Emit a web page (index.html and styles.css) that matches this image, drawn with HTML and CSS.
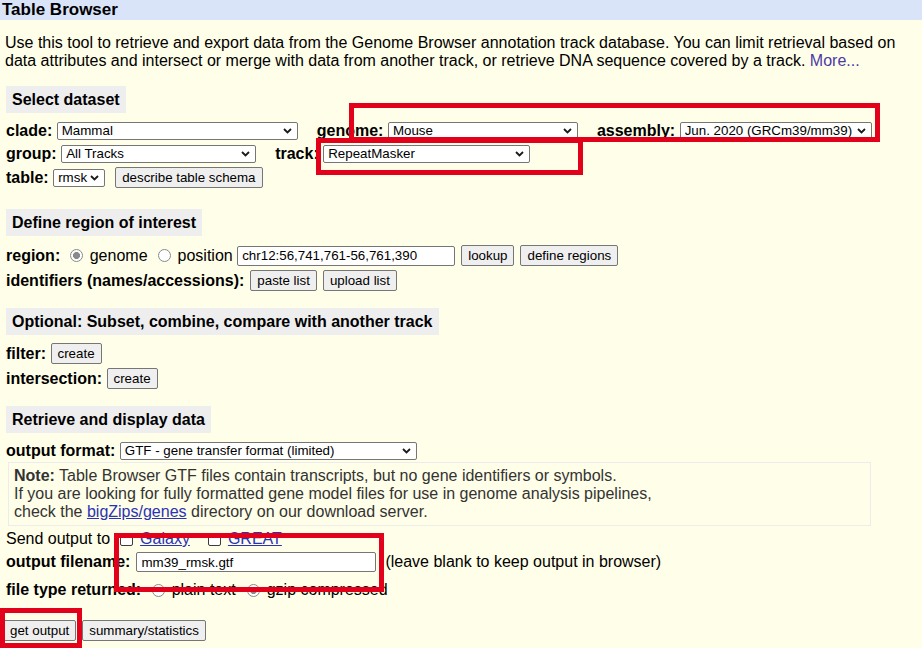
FILE: index.html
```html
<!DOCTYPE html>
<html>
<head>
<meta charset="utf-8">
<title>Table Browser</title>
<link rel="stylesheet" href="styles.css">
</head>
<body>
<div class="titlebar">Table Browser</div>
<main class="page">
  <p class="intro">Use this tool to retrieve and export data from the Genome Browser annotation track database. You can limit retrieval based on data attributes and intersect or merge with data from another track, or retrieve DNA sequence covered by a track. <a class="more" href="#">More...</a></p>

  <div class="banner b1">Select dataset</div>
  <div class="row h23 mt6">
    <span class="lbl">clade:</span>
    <span class="sel w-clade"><select><option>Mammal</option></select><svg viewBox="0 0 9 6"><polyline points="1,1 4.5,4.5 8,1"/></svg></span>
    <span class="lbl ml19">genome:</span>
    <span class="sel w-genome"><select><option>Mouse</option></select><svg viewBox="0 0 9 6"><polyline points="1,1 4.5,4.5 8,1"/></svg></span>
    <span class="lbl ml19">assembly:</span>
    <span class="sel w-assembly"><select><option>Jun. 2020 (GRCm39/mm39)</option></select><svg viewBox="0 0 9 6"><polyline points="1,1 4.5,4.5 8,1"/></svg></span>
  </div>
  <div class="row h23">
    <span class="lbl">group:</span>
    <span class="sel w-group"><select><option>All Tracks</option></select><svg viewBox="0 0 9 6"><polyline points="1,1 4.5,4.5 8,1"/></svg></span>
    <span class="lbl ml19">track:</span>
    <span class="sel w-track"><select><option>RepeatMasker</option></select><svg viewBox="0 0 9 6"><polyline points="1,1 4.5,4.5 8,1"/></svg></span>
  </div>
  <div class="row h25">
    <span class="lbl">table:</span>
    <span class="sel w-table"><select><option>rmsk</option></select><svg viewBox="0 0 9 6"><polyline points="1,1 4.5,4.5 8,1"/></svg></span>
    <button class="btn ml10">describe table schema</button>
  </div>

  <div class="banner b2">Define region of interest</div>
  <div class="row h23 mt8">
    <span class="lbl">region:</span>
    <input class="radio ml5" type="radio" name="region" checked>
    <span class="ml7">genome</span>
    <input class="radio ml10" type="radio" name="region">
    <span class="ml7">position</span>
    <input class="txt w-pos" type="text" value="chr12:56,741,761-56,761,390">
    <button class="btn ml6">lookup</button>
    <button class="btn ml6">define regions</button>
  </div>
  <div class="row h27">
    <span class="lbl">identifiers (names/accessions):</span>
    <button class="btn ml1">paste list</button>
    <button class="btn ml6">upload list</button>
  </div>

  <div class="banner b3">Optional: Subset, combine, compare with another track</div>
  <div class="row h25 mt6">
    <span class="lbl">filter:</span>
    <button class="btn">create</button>
  </div>
  <div class="row h25">
    <span class="lbl">intersection:</span>
    <button class="btn">create</button>
  </div>

  <div class="banner b4">Retrieve and display data</div>
  <div class="row h23 mt6">
    <span class="lbl">output format:</span>
    <span class="sel w-format"><select><option>GTF - gene transfer format (limited)</option></select><svg viewBox="0 0 9 6"><polyline points="1,1 4.5,4.5 8,1"/></svg></span>
  </div>
  <div class="note">
    <b>Note:</b> Table Browser GTF files contain transcripts, but no gene identifiers or symbols.<br>
    If you are looking for fully formatted gene model files for use in genome analysis pipelines,<br>
    check the <a class="lnk" href="#">bigZips/genes</a> directory on our download server.
  </div>
  <div class="row h18 mt4">
    <span>Send output to</span>
    <input class="chk ml10" type="checkbox">
    <a class="lnk ml7" href="#">Galaxy</a>
    <input class="chk ml18" type="checkbox">
    <a class="lnk ml7" href="#">GREAT</a>
  </div>
  <div class="row h22 mt3">
    <span class="lbl">output filename:</span>
    <input class="txt w-file ml1" type="text" value="mm39_rmsk.gtf">
    <span class="ml9">(leave blank to keep output in browser)</span>
  </div>
  <div class="row h22 mt6">
    <span class="lbl">file type returned:</span>
    <input class="radio ml6" type="radio" name="ftype">
    <span class="ml7">plain text</span>
    <input class="radio ml11" type="radio" name="ftype" checked>
    <span class="ml7">gzip compressed</span>
  </div>
  <div class="row h21 mt19 btnrow">
    <button class="btn">get output</button>
    <button class="btn ml6">summary/statistics</button>
  </div>
</main>

<div class="mark m1"></div>
<div class="mark m2"></div>
<div class="mark m3"></div>
<div class="mark m4"></div>
</body>
</html>
```

FILE: styles.css
```css
* { box-sizing: border-box; }
html, body { margin: 0; height: 648px; overflow: hidden; }
body {
  background: #fffee8;
  font-family: "Liberation Sans", Arial, sans-serif;
  font-size: 16px;
  color: #000;
  position: relative;
}
.titlebar {
  background: #d9e4f8;
  height: 20px;
  line-height: 20px;
  font-weight: bold;
  font-size: 17px;
  padding-left: 2px;
}
.page { padding: 0 6px; }
.intro { margin: 14px 0 0 -1px; line-height: 18px; width: 900px; }
.more { color: #4b3aa6; text-decoration: none; }

.banner {
  width: fit-content;
  background: #eeeeee;
  font-weight: bold;
  height: 27px;
  line-height: 27px;
  padding: 0 6px;
}
.b1 { margin-top: 16px; }
.b2 { margin-top: 19px; }
.b3 { margin-top: 14px; }
.b4 { margin-top: 15px; }

.row { display: flex; align-items: center; white-space: nowrap; }

.lbl { font-weight: bold; margin-right: 4.5px; }

.sel { position: relative; display: inline-flex; height: 18px; }
.sel select {
  -webkit-appearance: none;
  appearance: none;
  width: 100%;
  height: 18px;
  margin: 0;
  padding: 0 0 0 4px;
  border: 1px solid #767676;
  border-radius: 2px;
  background: #fff;
  color: #000;
  font: 13.33px "Liberation Sans", Arial, sans-serif;
}
.sel svg {
  position: absolute;
  right: 6px;
  top: 6px;
  width: 9px;
  height: 6px;
  fill: none;
  stroke: #1a1a1a;
  stroke-width: 1.8;
  pointer-events: none;
}
.w-clade { width: 241px; }
.w-genome { width: 190px; }
.w-assembly { width: 192px; }
.w-group { width: 195px; }
.w-track { width: 207px; }
.w-table { width: 52px; }
.w-format { width: 297px; }

.btn {
  font: 13.33px "Liberation Sans", Arial, sans-serif;
  color: #000;
  background: #efefef;
  border: 1px solid #767676;
  border-radius: 2px;
  padding: 0 6px;
  height: 21px;
  margin: 0;
}
.btnrow { margin-left: -3px; }

.txt {
  height: 20px;
  margin: 0;
  border: 1px solid #767676;
  border-radius: 2px;
  background: #fff;
  padding: 0 4px;
  color: #000;
  font: 13.33px "Liberation Sans", Arial, sans-serif;
}
.w-pos { width: 218px; margin-left: 4.5px; }
.w-file { width: 240px; }

.radio {
  -webkit-appearance: none;
  appearance: none;
  width: 13px;
  height: 13px;
  margin: 0;
  border: 1px solid #8a8a8a;
  border-radius: 50%;
  background: #fff;
}
.radio:checked {
  background: radial-gradient(circle, #8a8a8a 0 3.2px, #fff 3.8px);
}
.chk {
  -webkit-appearance: none;
  appearance: none;
  width: 13px;
  height: 13px;
  margin: 0;
  border: 1px solid #3c3c3c;
  border-radius: 2px;
  background: #fff;
}

.note {
  margin-left: 2px;
  width: 863px;
  border: 1px solid #ececec;
  padding: 4px 5px;
  line-height: 18px;
  color: #333;
}
.lnk { color: #2a33b5; text-decoration: underline; }

.mark {
  position: absolute;
  border: 5px solid #e3001b;
  pointer-events: none;
}
.m1 { left: 349px; top: 103px; width: 531px; height: 39px; }
.m2 { left: 316px; top: 138px; width: 267px; height: 37px; }
.m3 { left: 114px; top: 533px; width: 270px; height: 59px; }
.m4 { left: 0; top: 608px; width: 82px; height: 40px; }

/* spacing utilities (kept last so they win over component resets) */
.h18 { height: 18px; }
.h21 { height: 21px; }
.h22 { height: 22px; }
.h23 { height: 23px; }
.h25 { height: 25px; }
.h27 { height: 27px; }
.mt3 { margin-top: 3px; }
.mt4 { margin-top: 4px; }
.mt6 { margin-top: 6px; }
.mt8 { margin-top: 8px; }
.mt19 { margin-top: 19px; }
.ml1 { margin-left: 1.5px; }
.ml5 { margin-left: 5px; }
.ml6 { margin-left: 6px; }
.ml7 { margin-left: 7px; }
.ml9 { margin-left: 9px; }
.ml10 { margin-left: 10px; }
.ml11 { margin-left: 11px; }
.ml18 { margin-left: 18px; }
.ml19 { margin-left: 19px; }
```
